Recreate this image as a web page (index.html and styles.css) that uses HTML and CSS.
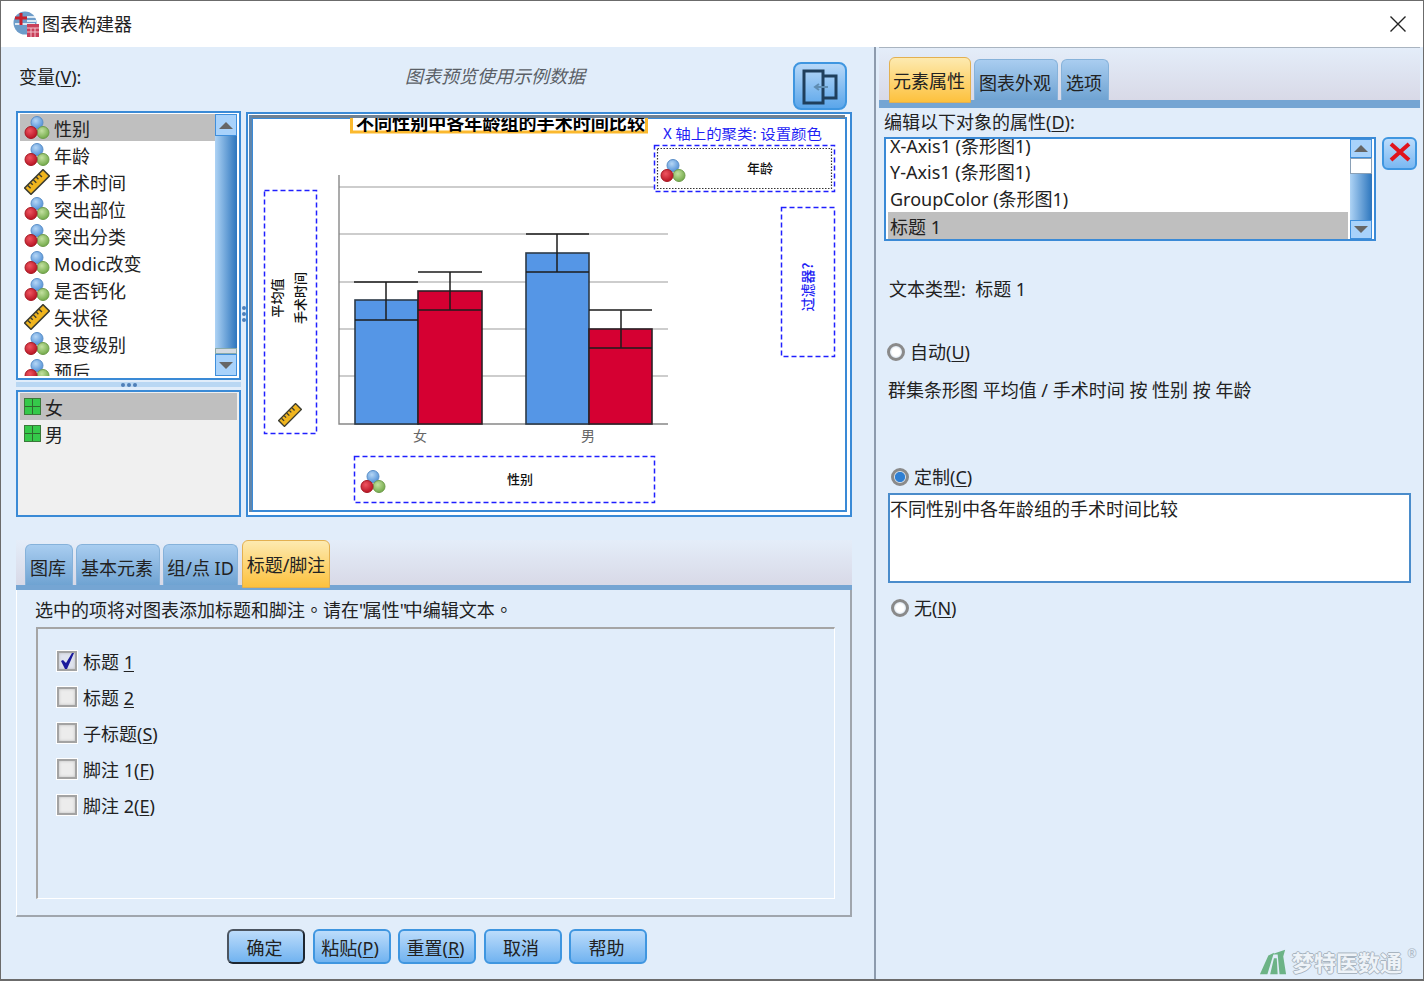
FILE: index.html
```html
<!DOCTYPE html>
<html>
  <head>
    <meta charset="utf-8">
    <title>图表构建器</title>
    <link rel="stylesheet" href="styles.css">
  </head>
  <body>
    <svg class="defs" width="0" height="0">
      <defs>
        <radialGradient id="ballBlue" cx="40%" cy="35%" r="70%"><stop offset="0" stop-color="#b5d6f5"/><stop offset="1" stop-color="#4f8fd6"/></radialGradient>
        <radialGradient id="ballRed" cx="40%" cy="35%" r="70%"><stop offset="0" stop-color="#ee5560"/><stop offset="1" stop-color="#b5101f"/></radialGradient>
        <radialGradient id="ballGreen" cx="40%" cy="35%" r="70%"><stop offset="0" stop-color="#c3e0a0"/><stop offset="1" stop-color="#6fa845"/></radialGradient>
        <symbol id="nominal" viewBox="0 0 26 26">
          <circle cx="13" cy="7.5" r="6" fill="url(#ballBlue)" stroke="#5b8fc8"/>
          <circle cx="19" cy="17.5" r="6" fill="url(#ballGreen)" stroke="#6f9c4c"/>
          <circle cx="7" cy="17.5" r="6" fill="url(#ballRed)" stroke="#a51822"/>
        </symbol>
        <symbol id="ruler" viewBox="0 0 26 26">
          <g transform="rotate(-45 13 13)">
            <rect x="0" y="8.5" width="26" height="9" fill="#f0b51e" stroke="#3c3c30" stroke-width="1.5"/>
            <path d="M4 9v4M8 9v3M12 9v4M16 9v3M20 9v4" stroke="#3c3c30" stroke-width="1.4"/>
          </g>
        </symbol>
      </defs>
    </svg>

    <div class="window">
      <div class="titlebar">
        <svg class="app-icon" width="26" height="26" viewBox="0 0 26 26">
          <circle cx="12" cy="12" r="11.5" fill="#6d9cc9"/>
          <path d="M2 13h20M14 6h9M14 10h9" stroke="#fff" stroke-width="1.4"/>
          <path d="M8 2v12M2 7h12" stroke="#c8202c" stroke-width="3"/>
          <rect x="14" y="13" width="12" height="13" fill="#c9405a"/>
          <path d="M14 17h12M14 21h12M18 17v9M22 17v9" stroke="#f2c2cc" stroke-width="1"/>
        </svg>
        <span class="title-text">图表构建器</span>
        <svg class="close" width="18" height="18" viewBox="0 0 18 18"><path d="M1.5 1.5l15 15M16.5 1.5l-15 15" stroke="#222" stroke-width="1.4"/></svg>
      </div>

      <div class="content">
        <div class="left">
          <div class="left-top">
            <span class="var-label">变量(<u>V</u>):</span>
            <span class="hint">图表预览使用示例数据</span>
            <button class="move-btn">
              <svg width="36" height="36" viewBox="0 0 36 36">
                <path d="M2 2h19v32H2zM21 7h13v22H21" fill="none" stroke="#1f3f5c" stroke-width="3"/>
                <path d="M26 18H13M17 15l-4 3 4 3" fill="none" stroke="#5f8db2" stroke-width="2"/>
              </svg>
            </button>
          </div>

          <div class="panes">
            <div class="var-col">
              <div class="listbox var-list">
                <div class="rows">
                  <div class="row selected"><svg class="ic"><use href="#nominal"/></svg>性别</div>
                  <div class="row"><svg class="ic"><use href="#nominal"/></svg>年龄</div>
                  <div class="row"><svg class="ic"><use href="#ruler"/></svg>手术时间</div>
                  <div class="row"><svg class="ic"><use href="#nominal"/></svg>突出部位</div>
                  <div class="row"><svg class="ic"><use href="#nominal"/></svg>突出分类</div>
                  <div class="row"><svg class="ic"><use href="#nominal"/></svg>Modic改变</div>
                  <div class="row"><svg class="ic"><use href="#nominal"/></svg>是否钙化</div>
                  <div class="row"><svg class="ic"><use href="#ruler"/></svg>矢状径</div>
                  <div class="row"><svg class="ic"><use href="#nominal"/></svg>退变级别</div>
                  <div class="row"><svg class="ic"><use href="#nominal"/></svg>预后</div>
                </div>
                <div class="scrollbar">
                  <div class="sb-btn"><i class="tri-up"></i></div>
                  <div class="sb-track"></div>
                  <div class="sb-thumb-end"></div>
                  <div class="sb-btn"><i class="tri-down"></i></div>
                </div>
              </div>
              <div class="hsplit"><i></i><i></i><i></i></div>
              <div class="listbox value-list">
                <div class="row selected"><span class="grid-ic"></span>女</div>
                <div class="row"><span class="grid-ic"></span>男</div>
              </div>
            </div>
            <div class="vsplit"><i></i><i></i><i></i></div>
            <div class="preview">
              <svg class="chart" width="602" height="401" viewBox="248 114 602 401">
                <!-- title, cut by the frame -->
                <rect x="351.5" y="110" width="295" height="22" fill="#fff" stroke="#fbb92f" stroke-width="3"/>
                <text class="ch-title" x="356" y="130" textLength="289" lengthAdjust="spacingAndGlyphs">不同性别中各年龄组的手术时间比较</text>
                <rect x="248" y="114" width="600" height="2" fill="#fff"/>
                <rect x="250" y="115" width="595" height="3" fill="#6f8193"/>
                <rect x="249" y="115" width="3" height="397" fill="#5f86ad"/>

                <!-- grid -->
                <g class="grid-lines">
                  <path d="M339 187H654M339 234H668M339 282H668M339 329H668M339 376H668"/>
                </g>
                <path d="M339 175V424H668" fill="none" stroke="#888" stroke-width="1.4"/>

                <!-- bars -->
                <g class="bars">
                  <rect class="b-blue" x="355" y="300" width="63" height="124"/>
                  <rect class="b-red" x="418" y="291" width="64" height="133"/>
                  <rect class="b-blue" x="526" y="253" width="63" height="171"/>
                  <rect class="b-red" x="589" y="329" width="63" height="95"/>
                </g>
                <g class="errs">
                  <path d="M354 282H418M386 282V320M355 320H418"/>
                  <path d="M418 272H482M450 272V310M418 310H482"/>
                  <path d="M526 234H589M557 234V272M526 272H589"/>
                  <path d="M589 310H652M621 310V348M589 348H652"/>
                </g>
                <text class="ch-cat" x="420" y="441">女</text>
                <text class="ch-cat" x="588" y="441">男</text>

                <!-- drop zones -->
                <rect class="zone" x="264.5" y="190.5" width="52" height="243"/>
                <text class="ch-small" transform="translate(282 298) rotate(-90)">平均值</text>
                <text class="ch-small" transform="translate(305 298) rotate(-90)">手术时间</text>
                <use href="#ruler" x="278" y="403" width="24" height="24"/>

                <text class="ch-legend" x="663" y="139" textLength="159" lengthAdjust="spacingAndGlyphs">X 轴上的聚类: 设置颜色</text>
                <rect class="zone" x="654.5" y="145.5" width="180" height="46"/>
                <rect class="zone-inner" x="657.5" y="148.5" width="174" height="40"/>
                <use href="#nominal" x="660" y="158" width="26" height="26"/>
                <text class="ch-small mid" x="760" y="173">年龄</text>

                <rect class="zone" x="781.5" y="207.5" width="53" height="149"/>
                <text class="ch-filter" transform="translate(813 287) rotate(-90)">过滤器?</text>

                <rect class="zone" x="354.5" y="456.5" width="300" height="46"/>
                <use href="#nominal" x="360" y="469" width="26" height="26"/>
                <text class="ch-small mid" x="520" y="484">性别</text>
              </svg>
            </div>
          </div>

          <div class="tabstrip bottom-tabs">
            <div class="tab">图库</div>
            <div class="tab">基本元素</div>
            <div class="tab">组/点 ID</div>
            <div class="tab active">标题/脚注</div>
          </div>
          <div class="tabbar"></div>
          <div class="tab-panel">
            <p class="panel-note">选中的项将对图表添加标题和脚注<span class="tc">。</span>请在<span class="q">"</span>属性<span class="q">"</span>中编辑文本<span class="tc">。</span></p>
            <div class="groupbox">
              <label class="check"><span class="box checked"><svg width="18" height="18" viewBox="0 0 18 18"><path d="M3 9l2-1 3 3 6-10h2L9 17H7z" fill="#1a1a9c"/></svg></span><span>标题 <u>1</u></span></label>
              <label class="check"><span class="box"></span><span>标题 <u>2</u></span></label>
              <label class="check"><span class="box"></span><span>子标题(<u>S</u>)</span></label>
              <label class="check"><span class="box"></span><span>脚注 1(<u>F</u>)</span></label>
              <label class="check"><span class="box"></span><span>脚注 2(<u>E</u>)</span></label>
            </div>
          </div>
          <div class="actions">
            <button class="btn default">确定</button>
            <button class="btn">粘贴(<u>P</u>)</button>
            <button class="btn">重置(<u>R</u>)</button>
            <button class="btn">取消</button>
            <button class="btn">帮助</button>
          </div>
        </div>

        <div class="right">
          <div class="tabstrip right-tabs">
            <div class="tab active">元素属性</div>
            <div class="tab">图表外观</div>
            <div class="tab">选项</div>
          </div>
          <div class="tabbar thick"></div>
          <div class="right-body">
            <div class="edit-label">编辑以下对象的属性(<u>D</u>):</div>
            <div class="edit-row">
              <div class="listbox prop-list">
                <div class="rows">
                  <div class="row clipped">X-Axis1 (条形图1)</div>
                  <div class="row">Y-Axis1 (条形图1)</div>
                  <div class="row">GroupColor (条形图1)</div>
                  <div class="row selected">标题 1</div>
                </div>
                <div class="scrollbar">
                  <div class="sb-btn short"><i class="tri-up"></i></div>
                  <div class="sb-white"></div>
                  <div class="sb-track"></div>
                  <div class="sb-btn short"><i class="tri-down"></i></div>
                </div>
              </div>
              <button class="del-btn">
                <svg width="24" height="20" viewBox="0 0 24 20"><path d="M3 2l18 16M21 2L3 18" fill="none" stroke="#e0141c" stroke-width="4"/></svg>
              </button>
            </div>
            <div class="text-type">文本类型:&nbsp; 标题 1</div>
            <label class="radio-line auto"><span class="radio"></span><span>自动(<u>U</u>)</span></label>
            <div class="auto-text">群集条形图 平均值 / 手术时间 按 性别 按 年龄</div>
            <label class="radio-line custom"><span class="radio on"></span><span>定制(<u>C</u>)</span></label>
            <div class="title-input">不同性别中各年龄组的手术时间比较</div>
            <label class="radio-line none"><span class="radio"></span><span>无(<u>N</u>)</span></label>
          </div>
        </div>
      </div>

      <div class="watermark">
        <svg width="28" height="28" viewBox="0 0 30 28">
          <path d="M1 27L10 7l6-3-7 23zM12 27l4-17 3 0 1 17zM22 27L20 6 13 6 28 1l-2 7 3 19z" fill="#6cb386"/>
        </svg>
        <span class="wm-text">梦特医数通</span><sup class="wm-r">®</sup>
      </div>
    </div>
  </body>
</html>
```

FILE: styles.css
```css
* {
  box-sizing: border-box;
}

body {
  margin: 0;
  font-family: "Noto Sans", "Noto Sans CJK SC", sans-serif;
  font-size: 18px;
  color: #222;
}

.defs {
  position: absolute;
}

u {
  text-underline-offset: 2px;
}

.window {
  position: relative;
  width: 1424px;
  height: 981px;
  overflow: hidden;
  background: #e1edfa;
  border: 1px solid #6b6b6b;
  border-width: 1px 1px 2px 1px;
}

.titlebar {
  display: flex;
  align-items: center;
  height: 46px;
  padding-left: 12px;
  background: #fff;
}

.app-icon {
  margin-right: 3px;
}

.title-text {
  flex: 1;
  line-height: 46px;
}

.close {
  margin-right: 16px;
}

.content {
  display: flex;
  height: 932px;
}

/* left side */
.left {
  width: 873px;
  padding: 0 22px 0 15px;
}

.left-top {
  display: flex;
  height: 64px;
  padding-top: 16px;
}

.var-label {
  width: 389px;
  padding-left: 3px;
  line-height: 28px;
}

.hint {
  width: 388px;
  line-height: 26px;
  font-style: italic;
  color: #5a5f66;
}

.move-btn {
  width: 54px;
  height: 48px;
  margin-top: -1px;
  padding: 4px 0 0;
  border: 2px solid #3f96e0;
  border-radius: 8px;
  background: linear-gradient(#b7d8f8, #5ba6ea);
}

.panes {
  display: flex;
  height: 406px;
}

.var-col {
  width: 225px;
}

.listbox {
  display: flex;
  overflow: hidden;
  background: #fff;
  border: 2px solid #3a8ad6;
}

.var-list {
  height: 269px;
  padding: 1px 2px 2px;
}

.rows {
  flex: 1;
  overflow: hidden;
}

.row {
  display: flex;
  align-items: center;
  height: 27px;
  padding-left: 4px;
  white-space: nowrap;
}

.row.selected {
  background: #bfbfbf;
}

.ic {
  width: 26px;
  height: 26px;
  margin-right: 4px;
  flex: none;
}

.scrollbar {
  display: flex;
  flex-direction: column;
  width: 22px;
  flex: none;
}

.sb-btn {
  display: flex;
  align-items: center;
  justify-content: center;
  height: 22px;
  flex: none;
  background: #a8d2fb;
  border: 1px solid #3f8fdc;
}

.sb-btn.short {
  height: 19px;
}

.sb-track {
  flex: 1;
  background: linear-gradient(to right, #aed3f5, #2c75bd);
}

.sb-thumb-end {
  height: 6px;
  background: #d5dbe2;
  border: 1px solid #8aa;
}

.sb-white {
  height: 16px;
  background: #fff;
  border: 1px solid #8aa0b6;
}

.tri-up,
.tri-down {
  display: block;
  width: 0;
  height: 0;
  border-left: 7px solid transparent;
  border-right: 7px solid transparent;
}

.tri-up {
  border-bottom: 7px solid #666;
}

.tri-down {
  border-top: 7px solid #666;
}

.hsplit {
  display: flex;
  align-items: center;
  justify-content: center;
  gap: 2px;
  height: 10px;
  background: linear-gradient(#e1edfa 20%, #b9d7f3 20%, #b9d7f3 70%, #e1edfa 70%);
}

.hsplit i {
  width: 4px;
  height: 4px;
  border-radius: 50%;
  background: #4f7fb8;
}

.value-list {
  display: block;
  height: 127px;
  padding: 1px 2px;
  background: #f0f0f0;
  border-color: #3a8ad6;
}

.grid-ic {
  width: 17px;
  height: 17px;
  margin-right: 4px;
  flex: none;
  background:
    linear-gradient(#2f6a2f, #2f6a2f) center / 100% 1px no-repeat,
    linear-gradient(#2f6a2f, #2f6a2f) center / 1px 100% no-repeat,
    #35c94a;
  border: 1px solid #3a7a3a;
}

.vsplit {
  display: flex;
  flex-direction: column;
  align-items: center;
  justify-content: center;
  gap: 2px;
  width: 5px;
}

.vsplit i {
  width: 4px;
  height: 4px;
  border-radius: 50%;
  background: #4f7fb8;
}

.preview {
  width: 606px;
  margin-top: 1px;
  background: #fff;
  border: 2px solid #3a8ad6;
  box-shadow: inset 0 0 0 3px #fff, inset 0 0 0 5px #3a8ad6;
}

.chart {
  display: block;
  font-family: "Noto Sans CJK SC", sans-serif;
}

.grid-lines path {
  fill: none;
  stroke: #bdbdbd;
  stroke-width: 1.4;
}

.b-blue {
  fill: #5596e6;
  stroke: #2c3a48;
  stroke-width: 1.6;
}

.b-red {
  fill: #d50032;
  stroke: #2c2026;
  stroke-width: 1.6;
}

.errs path {
  fill: none;
  stroke: #1d1d1d;
  stroke-width: 1.5;
}

.zone {
  fill: none;
  stroke: #2020ff;
  stroke-width: 1.5;
  stroke-dasharray: 5 3;
}

.zone-inner {
  fill: none;
  stroke: #333;
  stroke-width: 1.2;
  stroke-dasharray: 1.5 1.5;
}

.ch-title {
  font-size: 18px;
  font-weight: 700;
  fill: #000;
}

.ch-cat {
  font-size: 14px;
  fill: #666;
  text-anchor: middle;
}

.ch-small {
  font-size: 13px;
  font-weight: 500;
  fill: #111;
  text-anchor: middle;
}

.ch-legend {
  font-size: 14px;
  fill: #1f1ff5;
}

.ch-filter {
  font-size: 14px;
  font-weight: 500;
  fill: #1f1ff5;
  text-anchor: middle;
}

/* tabs */
.tabstrip {
  display: flex;
  align-items: flex-end;
  gap: 3px;
  background: linear-gradient(#e4edf9, #d8d9e7);
}

.tab {
  display: flex;
  align-items: center;
  justify-content: center;
  height: 41px;
  padding: 4px 2px 0 0;
  border: 1px solid #86b2da;
  border-bottom: none;
  border-radius: 6px 6px 0 0;
  background: linear-gradient(#a9cdf0, #6fa3d2);
  white-space: nowrap;
}

.tab.active {
  position: relative;
  z-index: 1;
  padding-top: 0;
  margin-bottom: -3px;
  border: 1px solid #e3b050;
  background: linear-gradient(#fdeab0, #fdc13d);
}

.bottom-tabs {
  height: 45px;
  margin-top: 23px;
  padding-left: 9px;
}

.bottom-tabs .tab.active {
  height: 48px;
}

.bottom-tabs .tab:nth-child(1) { width: 48px; }
.bottom-tabs .tab:nth-child(2) { width: 84px; }
.bottom-tabs .tab:nth-child(3) { width: 75px; padding-left: 2px; }
.bottom-tabs .tab:nth-child(4) { width: 88px; margin-left: 1px; padding-left: 2px; }

.tabbar {
  height: 5px;
  background: #75a5d3;
}

.tabbar.thick {
  height: 8px;
}

.tab-panel {
  height: 327px;
  padding: 5px 15px 15px 19px;
  border-right: 2px solid #a0a6ad;
  border-bottom: 2px solid #a0a6ad;
  border-left: 1px solid #fff;
}

.panel-note {
  margin: 0 0 3px -1px;
  line-height: 28px;
}

.tc {
  font-family: "Noto Sans CJK TC", sans-serif;
}

.q {
  letter-spacing: -2.5px;
}

.groupbox {
  display: flex;
  flex-direction: column;
  height: 272px;
  padding-top: 14px;
  padding-left: 19px;
  border: 1px solid #fff;
  border-top: 2px solid #a5a5a5;
  border-left: 2px solid #a5a5a5;
}

.check {
  display: flex;
  align-items: center;
  height: 36px;
}

.box {
  width: 20px;
  height: 20px;
  margin-right: 6px;
  flex: none;
  background: #ececec;
  border: 2px solid #a3a3a3;
  box-shadow: 0 0 0 1px #fff, inset 0 0 3px #bbb;
}

.box svg {
  display: block;
  margin: -1px;
}

.box.checked {
  background: #dfe3ee;
}

.actions {
  display: flex;
  gap: 7.5px;
  margin-top: 12px;
  padding-left: 211px;
}

.btn {
  width: 78px;
  height: 35px;
  padding: 0 3px 0 0;
  font: inherit;
  color: inherit;
  border: 2px solid #3f96e0;
  border-radius: 6px;
  background: linear-gradient(#bcdcfb, #71b3f0);
}

.btn.default {
  border-color: #4c5560 #1d2630 #1d2630 #4c5560;
}

/* right side */
.right {
  width: 549px;
  border-left: 2px solid #8d9bad;
  padding: 0 3px;
}

.right-tabs {
  height: 53px;
  padding-left: 10px;
  border-top: 1px solid #a9b4c0;
}

.right-tabs .tab {
  height: 41px;
}

.right-tabs .tab:nth-child(1) { width: 82px; height: 46px; }
.right-tabs .tab:nth-child(2) { width: 84px; }
.right-tabs .tab:nth-child(3) { width: 48px; }

.right-body {
  padding-left: 5px;
}

.edit-label {
  height: 29px;
  line-height: 29px;
}

.edit-row {
  display: flex;
  gap: 6px;
}

.prop-list {
  width: 492px;
  height: 104px;
  padding: 0 2px;
}

.prop-list .rows {
  padding-right: 2px;
}

.prop-list .row {
  padding-left: 2px;
}

.prop-list .row.clipped {
  height: 24px;
  margin-top: -6px;
}

.prop-list .row.selected {
  margin-top: 1px;
}

.del-btn {
  width: 35px;
  height: 33px;
  padding: 0;
  border: 2px solid #3f96e0;
  border-radius: 6px;
  background: linear-gradient(#bcdcfb, #7ab8f2);
}

.text-type {
  margin-top: 34px;
  padding-left: 5px;
  line-height: 28px;
}

.radio-line {
  display: flex;
  align-items: center;
  line-height: 28px;
}

.radio {
  width: 18px;
  height: 18px;
  margin-right: 5px;
  flex: none;
  border: 3px solid #8a8a8a;
  border-radius: 50%;
  background: radial-gradient(circle, #fff 45%, #d6e2ee 75%);
}

.radio.on {
  background: radial-gradient(circle, #2f7fd3 55%, #d6e2ee 65%);
}

.auto {
  margin-top: 35px;
  padding-left: 3px;
}

.auto-text {
  margin-top: 10px;
  padding-left: 4px;
  line-height: 28px;
}

.custom {
  margin-top: 59px;
  padding-left: 7px;
}

.title-input {
  width: 523px;
  height: 90px;
  margin-top: 2px;
  margin-left: 4px;
  padding: 0;
  line-height: 28px;
  background: #fff;
  border: 2px solid #4a8ccb;
}

.none {
  margin-top: 11px;
  padding-left: 7px;
}

/* watermark over corner */
.watermark {
  position: absolute;
  right: 6px;
  bottom: 3px;
  display: flex;
  align-items: flex-end;
  gap: 5px;
}

.wm-text {
  font-size: 22px;
  font-weight: 700;
  color: #eef3f8;
  line-height: 28px;
  text-shadow: -1px 0 #a8b4bf, 1px 0 #a8b4bf, 0 1px #a8b4bf, 0 -1px #a8b4bf;
}

.wm-r {
  align-self: flex-start;
  font-size: 12px;
  line-height: 12px;
  color: #b0bcc8;
}
```
